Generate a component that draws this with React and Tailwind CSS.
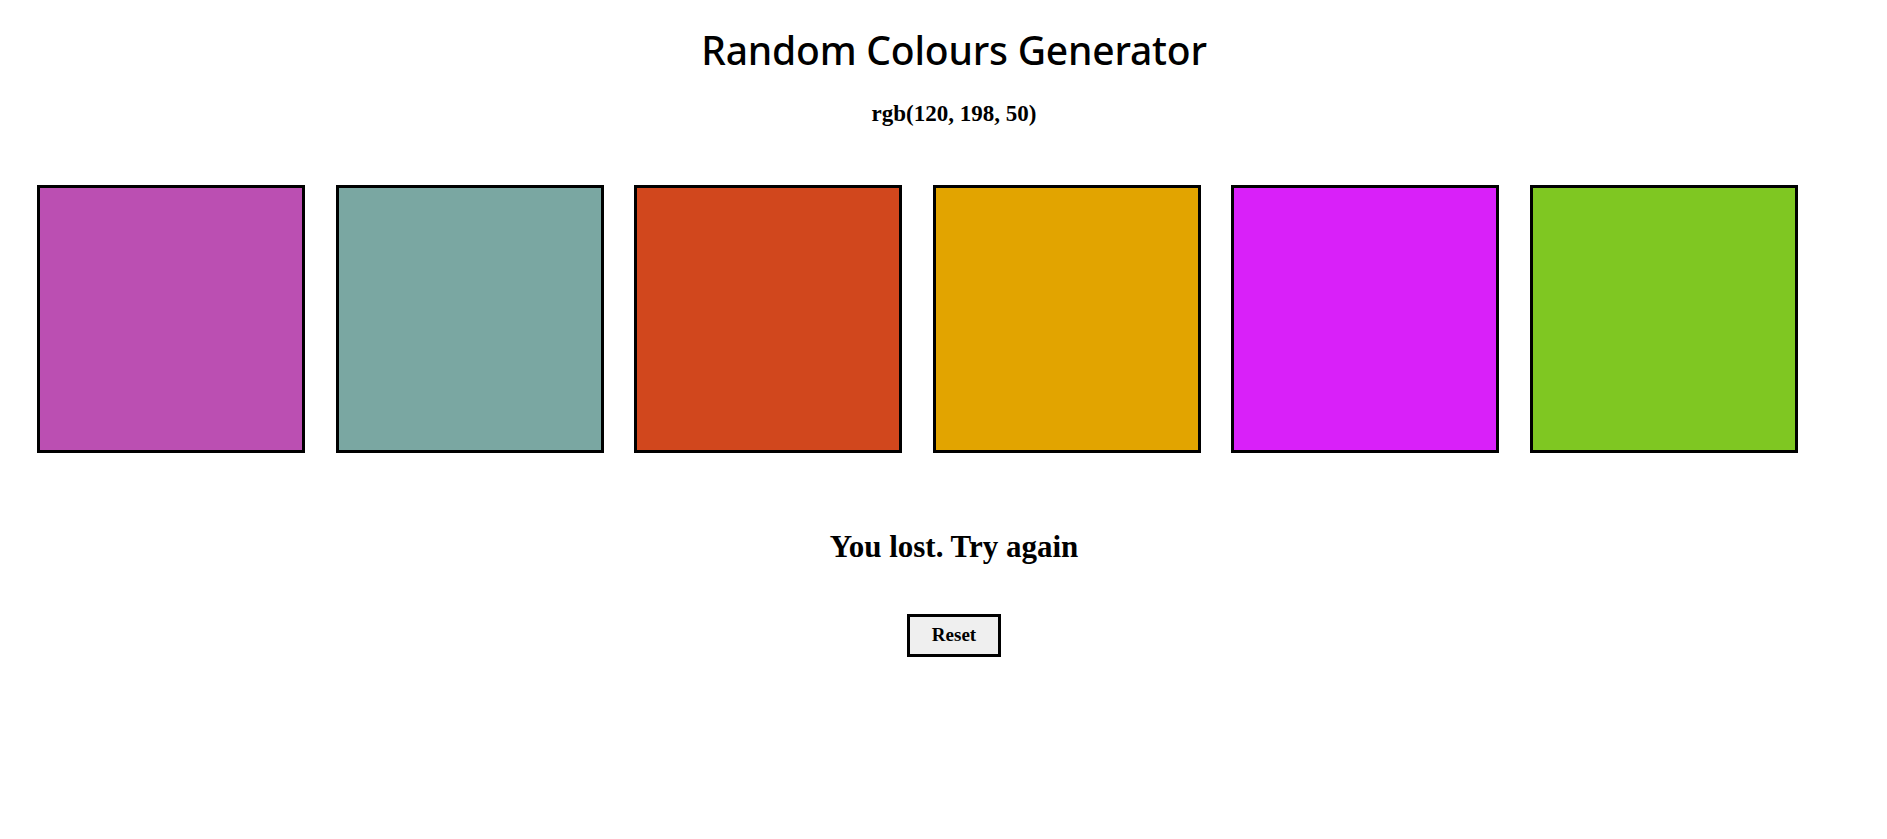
import React from "react";

const squares = [
  "bg-[#bb4fb2]",
  "bg-[#7aa7a2]",
  "bg-[#d1471d]",
  "bg-[#e2a400]",
  "bg-[#d920f9]",
  "bg-[#7fc722]",
];

export default function App() {
  return (
    <div className="w-full min-h-[839px] bg-white text-black flex flex-col">
      <h1 className="pl-[21px] text-center text-[39px] leading-[48px] font-medium mt-[26px] tracking-[-0.2px] font-['Noto_Sans',sans-serif]">
        Random Colours Generator
      </h1>
      <h3 className="pl-[21px] text-center text-[23px] leading-[28px] font-bold mt-[26px] font-['Liberation_Serif',serif]">
        rgb(120, 198, 50)
      </h3>
      <div className="flex gap-[30.6px] pl-[37px] mt-[57px]">
        {squares.map((c) => (
          <div
            key={c}
            className={`w-[268px] h-[268px] border-[3px] border-black shrink-0 ${c}`}
          />
        ))}
      </div>
      <h2 className="pl-[21px] text-center text-[31px] leading-[36px] font-bold mt-[76px] font-['Liberation_Serif',serif]">
        You lost. Try again
      </h2>
      <div className="pl-[21px] flex justify-center mt-[49px]">
        <button className="w-[94px] h-[43px] border-[3px] border-black bg-[#efefef] text-[19px] font-bold font-['Liberation_Serif',serif]">
          Reset
        </button>
      </div>
    </div>
  );
}
